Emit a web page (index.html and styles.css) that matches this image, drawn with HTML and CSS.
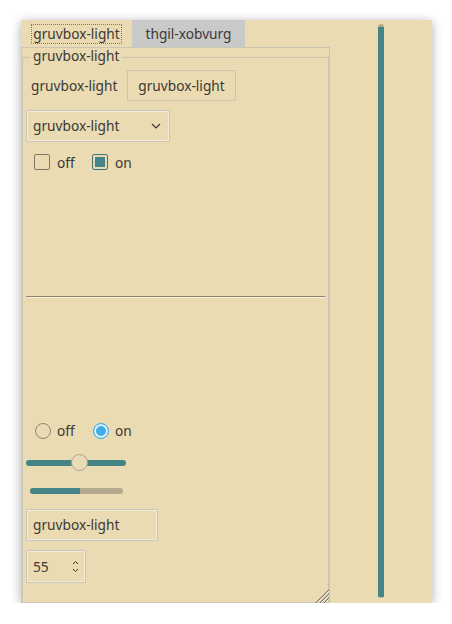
FILE: index.html
```html
<!DOCTYPE html>
<html>
<head>
<meta charset="utf-8">
<link rel="stylesheet" href="styles.css">
</head>
<body>
<div class="window">
  <div class="tabs">
    <div class="tabbar">
      <div class="tab tab-active"><span class="focus">gruvbox-light</span></div>
      <div class="tab tab-other">thgil-xobvurg</div>
    </div>
    <div class="pane">
      <div class="group">
        <span class="group-title">gruvbox-light</span>
        <div class="row row-first">
          <span class="label">gruvbox-light</span>
          <div class="button">gruvbox-light</div>
        </div>
        <div class="combo">
          <span>gruvbox-light</span>
          <svg class="chev" width="10" height="6" viewBox="0 0 10 6"><path d="M1 1 L5 5 L9 1" fill="none" stroke="#3c3836" stroke-width="1.2"/></svg>
        </div>
        <div class="checks">
          <span class="check"></span><span class="opt opt-first">off</span>
          <span class="check checked"></span><span class="opt">on</span>
        </div>
        <div class="sep"></div>
        <div class="radios">
          <span class="radio"></span><span class="opt opt-first">off</span>
          <span class="radio rchecked"></span><span class="opt">on</span>
        </div>
        <div class="slider">
          <div class="groove"></div>
          <div class="handle"></div>
        </div>
        <div class="progress"><div class="pfill"></div></div>
        <div class="lineedit">gruvbox-light</div>
        <div class="spin">
          <span>55</span>
          <svg class="arrows" width="7" height="13" viewBox="0 0 7 13"><path d="M1 4 L3.5 1.5 L6 4 M1 9 L3.5 11.5 L6 9" fill="none" stroke="#3c3836" stroke-width="1"/></svg>
        </div>
      </div>
      <svg class="grip" width="15" height="15" viewBox="0 0 15 15">
        <path d="M2 15 L15 2 M6 15 L15 6 M10 15 L15 10" stroke="#7a7565" stroke-width="1.2"/>
        <path d="M3 15 L15 3 M7 15 L15 7 M11 15 L15 11" stroke="#fbf5e6" stroke-width="1"/>
      </svg>
    </div>
  </div>
  <div class="side">
    <div class="vbar"><div class="vfill"></div></div>
  </div>
</div>
</body>
</html>
```

FILE: styles.css
```css
html, body {
  margin: 0;
  padding: 0;
  background: #ffffff;
}
body {
  font-family: "Noto Sans", "DejaVu Sans", sans-serif;
  font-size: 13.7px;
  color: #3c3836;
}
.window {
  margin: 20px 0 0 21px;
  width: 411px;
  height: 583px;
  background: #ebdbb2;
  box-shadow: 0 2px 10px rgba(0, 0, 0, 0.32);
  display: flex;
}
.tabs {
  width: 309px;
  display: flex;
  flex-direction: column;
}
.tabbar {
  display: flex;
  height: 27px;
}
.tab {
  display: flex;
  align-items: center;
  justify-content: center;
  height: 27px;
}
.tab-active {
  width: 111px;
}
.tab-other {
  width: 113px;
  background: #c9c9ca;
}
.focus {
  outline: 1px dotted #4f9a4a;
  outline-offset: 0;
  padding: 1px 1px;
  line-height: 16px;
}
.pane {
  position: relative;
  flex: 1;
  border-top: 1px solid #cbc5b3;
  border-left: 1px solid #d2cbb8;
  border-right: 1px solid #c9c4b6;
  display: flex;
  flex-direction: column;
}
.group {
  position: relative;
  margin-top: 9px;
  flex: 1;
  border: 1px solid #cbc5b3;
  border-right-color: #c9c4b6;
  padding: 12px 3px 0 3px;
  display: flex;
  flex-direction: column;
  align-items: flex-start;
}
.group-title {
  position: absolute;
  left: 7px;
  top: -10px;
  padding: 0 3px;
  background: #ebdbb2;
  line-height: 16px;
}
.row {
  display: flex;
  align-items: center;
  height: 31px;
}
.label {
  margin-left: 5px;
  width: 96px;
}
.button {
  width: 107px;
  height: 29px;
  border: 1px solid #cbc2aa;
  border-radius: 1px;
  display: flex;
  align-items: center;
  justify-content: center;
}
.combo {
  margin-top: 9px;
  box-sizing: border-box;
  width: 144px;
  height: 32px;
  border: 1px solid #cac6bd;
  box-shadow: inset 0 0 0 1px #f3ead3;
  display: flex;
  align-items: center;
  justify-content: space-between;
  padding: 0 8px 2px 6px;
}
.chev {
  margin-top: 2px;
}
.checks, .radios {
  display: flex;
  align-items: center;
  height: 16px;
  margin-left: 8px;
}
.checks {
  margin-top: 12px;
}
.check {
  box-sizing: border-box;
  width: 16px;
  height: 16px;
  border: 1px solid #7e796b;
  border-radius: 2px;
  position: relative;
}
.checked {
  border-color: #3f7478;
}
.checked::after {
  content: "";
  position: absolute;
  left: 2px;
  top: 2px;
  width: 10px;
  height: 10px;
  background: #458588;
}
.opt {
  margin-left: 7px;
  line-height: 16px;
}
.checks .opt {
  margin-top: 2px;
}
.checks .opt-first {
  width: 35px;
}
.sep {
  margin-top: 126px;
  align-self: stretch;
  height: 1px;
  background: #8c876c;
  border-bottom: 1px solid #f8f0dc;
}
.radios {
  margin-top: 125px;
  margin-left: 9px;
}
.radio {
  box-sizing: border-box;
  width: 16px;
  height: 16px;
  border: 1px solid #8a8578;
  border-radius: 50%;
}
.rchecked {
  border-color: #3daee9;
  background: #3daee9;
  box-shadow: inset 0 0 0 2px #e6f3fb;
}
.radios .opt {
  margin-left: 6px;
}
.radios .opt-first {
  width: 36px;
}
.slider {
  position: relative;
  margin-top: 15px;
  width: 100px;
  height: 17px;
  display: flex;
  align-items: center;
}
.groove {
  width: 100px;
  height: 6px;
  border-radius: 3px;
  background: #458588;
}
.handle {
  position: absolute;
  left: 45px;
  top: 0;
  box-sizing: border-box;
  width: 17px;
  height: 17px;
  border-radius: 50%;
  background: #ebdbb2;
  border: 1px solid #a9a499;
}
.progress {
  margin-top: 17px;
  margin-left: 4px;
  width: 93px;
  height: 6px;
  border-radius: 3px;
  background: #b3a98c;
  overflow: hidden;
}
.pfill {
  width: 50px;
  height: 6px;
  background: #458588;
}
.lineedit {
  margin-top: 15px;
  box-sizing: border-box;
  width: 132px;
  height: 32px;
  border: 1px solid #cac6bd;
  box-shadow: inset 0 0 0 1px #f3ead3;
  padding: 0 0 1px 6px;
  display: flex;
  align-items: center;
}
.spin {
  margin-top: 9px;
  box-sizing: border-box;
  width: 60px;
  height: 33px;
  border: 1px solid #cac6bd;
  box-shadow: inset 0 0 0 1px #f3ead3;
  padding: 0 6px 0 6px;
  display: flex;
  align-items: center;
  justify-content: space-between;
}
.grip {
  position: absolute;
  right: 0;
  bottom: 0;
}
.side {
  flex: 1;
  display: flex;
  justify-content: center;
  padding: 4px 0 5px;
}
.vbar {
  width: 6px;
  background: #b3a98c;
  border-radius: 3px;
  display: flex;
  flex-direction: column;
  padding: 3px 0 1px;
}
.vfill {
  flex: 1;
  background: #458588;
}
```
